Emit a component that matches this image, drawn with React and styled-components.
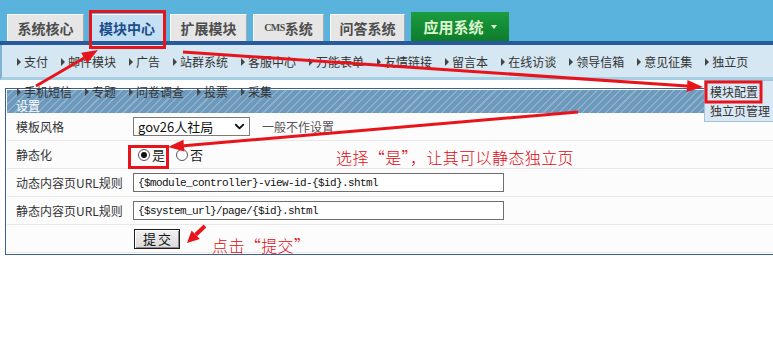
import React from "react";
import styled, { createGlobalStyle } from "styled-components";
import { ChevronDown } from "lucide-react";

const GlobalStyle = createGlobalStyle`
  html, body {
    margin: 0;
    padding: 0;
    background: #fff;
  }
  body {
    font-family: "Noto Sans CJK SC", "Liberation Sans", sans-serif;
    font-size: 12px;
    color: #333;
  }
`;

const RED = "#e8141c";

const Page = styled.div`
  position: relative;
  width: 773px;
  height: 356px;
  overflow: hidden;
  background: #fff;
`;

const TopBar = styled.div`
  height: 41px;
  background: #5ab3dc;
  border-bottom: 4px solid #27599b;
  display: flex;
  align-items: flex-end;
  gap: 6px;
  padding-left: 7px;
`;

const Tab = styled.div`
  width: ${(p) => p.$w}px;
  height: 27px;
  box-sizing: border-box;
  display: flex;
  align-items: center;
  justify-content: center;
  background: ${(p) => (p.$active ? "#c4e0f2" : "#e6e6e6")};
  border: 1px solid #fafafa;
  border-right-color: #a8a8a8;
  border-bottom: none;
  color: ${(p) => (p.$active ? "#1c4d8c" : "#4d4d4d")};
  font-size: 14px;
  font-weight: bold;
  line-height: 1;
`;

const Small = styled.span`
  font-family: "Liberation Serif", serif;
  font-size: 10px;
  letter-spacing: -0.5px;
`;

const AppTab = styled.div`
  width: 98px;
  height: 29px;
  box-sizing: border-box;
  display: flex;
  align-items: center;
  justify-content: center;
  gap: 7px;
  background: linear-gradient(#1c9c40, #0d7c2c);
  color: #dcf6cc;
  font-size: 15px;
  font-weight: bold;
  line-height: 1;

  &::after {
    content: "";
    border-top: 4px solid #dcf6cc;
    border-left: 3.5px solid transparent;
    border-right: 3.5px solid transparent;
  }
`;

const SubNav = styled.div`
  position: relative;
  z-index: 2;
  height: 30px;
  background: #d5e7f2;
  border-bottom: 3px solid #a6cfe3;
  border-left: 2px solid #7fb3d3;
  padding: 2px 0 0 15px;
  display: flex;
  flex-wrap: wrap;
  align-content: flex-start;
  line-height: 30px;
`;

const NavItem = styled.span`
  display: inline-flex;
  align-items: center;
  margin-right: 13px;
  font-size: 12px;
  color: #333;
  white-space: nowrap;

  &::before {
    content: "";
    border-left: 4px solid #444;
    border-top: 4px solid transparent;
    border-bottom: 4px solid transparent;
    margin-right: 3px;
  }
`;

const Menu = styled.div`
  position: absolute;
  z-index: 3;
  left: 704px;
  top: 80px;
  width: 75px;
  padding: 1px 0;
  background: #d9e8f5;
  border: 1px solid #a4c2dc;
`;

const MenuItem = styled.div`
  height: 19px;
  line-height: 19px;
  padding-left: 5px;
  font-size: 12px;
  color: #333;
`;

const Panel = styled.div`
  margin: 8px 0 0 5px;
  width: 790px;
  border: 1px solid #3b5f94;
  padding: 1px;
`;

const PanelHead = styled.div`
  height: 23px;
  box-sizing: border-box;
  padding: 9px 0 0 9px;
  line-height: 14px;
  color: #fff;
  font-size: 12px;
  background: repeating-linear-gradient(135deg, #6d99bc 0 4px, #8cb0cc 4px 5.5px);
`;

const Row = styled.div`
  display: grid;
  grid-template-columns: 121px 1fr;
  height: 28px;
  box-sizing: border-box;
  border-bottom: 1px solid #e8e8e8;
  background: #fcfcfc;
  align-items: center;
`;

const Label = styled.div`
  padding-left: 9px;
  font-size: 12px;
  color: #333;
  white-space: nowrap;
`;

const Value = styled.div`
  padding-left: 5px;
  display: flex;
  align-items: center;
`;

const Select = styled.div`
  width: 117px;
  height: 19px;
  box-sizing: border-box;
  border: 1px solid #7a7a7a;
  background: #fff;
  display: flex;
  align-items: center;
  justify-content: space-between;
  padding: 0 2px 0 4px;
  font-size: 13px;
  color: #111;
`;

const Hint = styled.span`
  margin-left: 12px;
  color: #555;
  font-size: 12px;
`;

const RadioLabel = styled.span`
  display: inline-flex;
  align-items: center;
  gap: 2px;
  margin-left: ${(p) => p.$ml}px;
  font-size: 13px;
  color: #222;
`;

const Radio = styled.span`
  width: 12px;
  height: 12px;
  box-sizing: border-box;
  border-radius: 50%;
  border: 1px solid #555;
  background: #fff;
  display: inline-flex;
  align-items: center;
  justify-content: center;

  &::after {
    content: "";
    width: 6px;
    height: 6px;
    border-radius: 50%;
    background: ${(p) => (p.$checked ? "#111" : "transparent")};
  }
`;

const TextInput = styled.input`
  width: 371px;
  height: 19px;
  box-sizing: border-box;
  border: 1px solid #6e6e6e;
  padding: 0 4px;
  font-family: "Liberation Mono", monospace;
  font-size: 11px;
  letter-spacing: -0.6px;
  color: #111;
  background: #fff;
  outline: none;
`;

const Submit = styled.button`
  margin-left: 1px;
  width: 46px;
  height: 20px;
  box-sizing: border-box;
  border: 1px solid #1e1e1e;
  box-shadow: inset 1px 1px #fff, inset -1px -1px #8a8a8a;
  background: linear-gradient(#f2f2f2, #dadada);
  font-family: "Noto Sans CJK SC", sans-serif;
  font-size: 13px;
  letter-spacing: 2px;
  padding: 0 0 0 2px;
  line-height: 1;
  color: #111;
`;

const Note = styled.span`
  position: absolute;
  z-index: 6;
  left: ${(p) => p.$x}px;
  top: ${(p) => p.$y}px;
  color: #dd0a12;
  font-size: 16px;
  font-weight: 300;
  letter-spacing: 0.4px;
  line-height: 20px;
  white-space: nowrap;
`;

const Marks = styled.svg`
  position: absolute;
  z-index: 5;
  left: 0;
  top: 0;
  pointer-events: none;
`;

function Arrow({ x1, y1, x2, y2, head = 16, half = 6, w = 3 }) {
  const a = Math.atan2(y2 - y1, x2 - x1);
  const bx = x2 - head * Math.cos(a);
  const by = y2 - head * Math.sin(a);
  const px = -Math.sin(a) * half;
  const py = Math.cos(a) * half;
  return (
    <g fill={RED} stroke="none">
      <line x1={x1} y1={y1} x2={bx} y2={by} stroke={RED} strokeWidth={w} />
      <polygon points={`${x2},${y2} ${bx + px},${by + py} ${bx - px},${by - py}`} />
    </g>
  );
}

const tabs = [
  { label: "系统核心", w: 77 },
  { label: "模块中心", w: 74, active: true },
  { label: "扩展模块", w: 77 },
  { label: <><Small>CMS</Small>系统</>, w: 71 },
  { label: "问答系统", w: 75 },
];

const navItems = [
  "支付", "邮件模块", "广告", "站群系统", "客服中心", "万能表单", "友情链接",
  "留言本", "在线访谈", "领导信箱", "意见征集", "独立页",
  "手机短信", "专题", "问卷调查", "投票", "采集",
];

export default function App() {
  return (
    <Page>
      <GlobalStyle />
      <TopBar>
        {tabs.map((t, i) => (
          <Tab key={i} $w={t.w} $active={t.active}>
            {t.label}
          </Tab>
        ))}
        <AppTab>应用系统</AppTab>
      </TopBar>

      <SubNav>
        {navItems.map((n) => (
          <NavItem key={n}>{n}</NavItem>
        ))}
      </SubNav>

      <Menu>
        <MenuItem>模块配置</MenuItem>
        <MenuItem>独立页管理</MenuItem>
      </Menu>

      <Panel>
        <PanelHead>设置</PanelHead>
        <Row>
          <Label>模板风格</Label>
          <Value>
            <Select>
              <span>gov26人社局</span>
              <ChevronDown size={15} strokeWidth={3} color="#111" />
            </Select>
            <Hint>一般不作设置</Hint>
          </Value>
        </Row>
        <Row>
          <Label>静态化</Label>
          <Value>
            <RadioLabel $ml={5}>
              <Radio $checked />是
            </RadioLabel>
            <RadioLabel $ml={11}>
              <Radio />否
            </RadioLabel>
          </Value>
        </Row>
        <Row>
          <Label>动态内容页URL规则</Label>
          <Value>
            <TextInput readOnly value="{$module_controller}-view-id-{$id}.shtml" />
          </Value>
        </Row>
        <Row>
          <Label>静态内容页URL规则</Label>
          <Value>
            <TextInput readOnly value="{$system_url}/page/{$id}.shtml" />
          </Value>
        </Row>
        <Row>
          <Label />
          <Value>
            <Submit>提交</Submit>
          </Value>
        </Row>
      </Panel>

      <Note $x={336} $y={147}>选择“是”，让其可以静态独立页</Note>
      <Note $x={212} $y={235}>点击“提交”</Note>

      <Marks width="773" height="356">
        <g fill="none" stroke={RED} strokeWidth="3">
          <rect x="90.5" y="11.5" width="74" height="36" />
          <rect x="706" y="82" width="55" height="20" />
          <rect x="129.5" y="146.5" width="38" height="21" />
        </g>
        <Arrow x1={36} y1={86} x2={98} y2={50} />
        <Arrow x1={183} y1={52} x2={703} y2={87} />
        <Arrow x1={578} y1={112} x2={168} y2={147} />
        <Arrow x1={205} y1={226} x2={187} y2={243} head={12} half={6} w={4} />
      </Marks>
    </Page>
  );
}
